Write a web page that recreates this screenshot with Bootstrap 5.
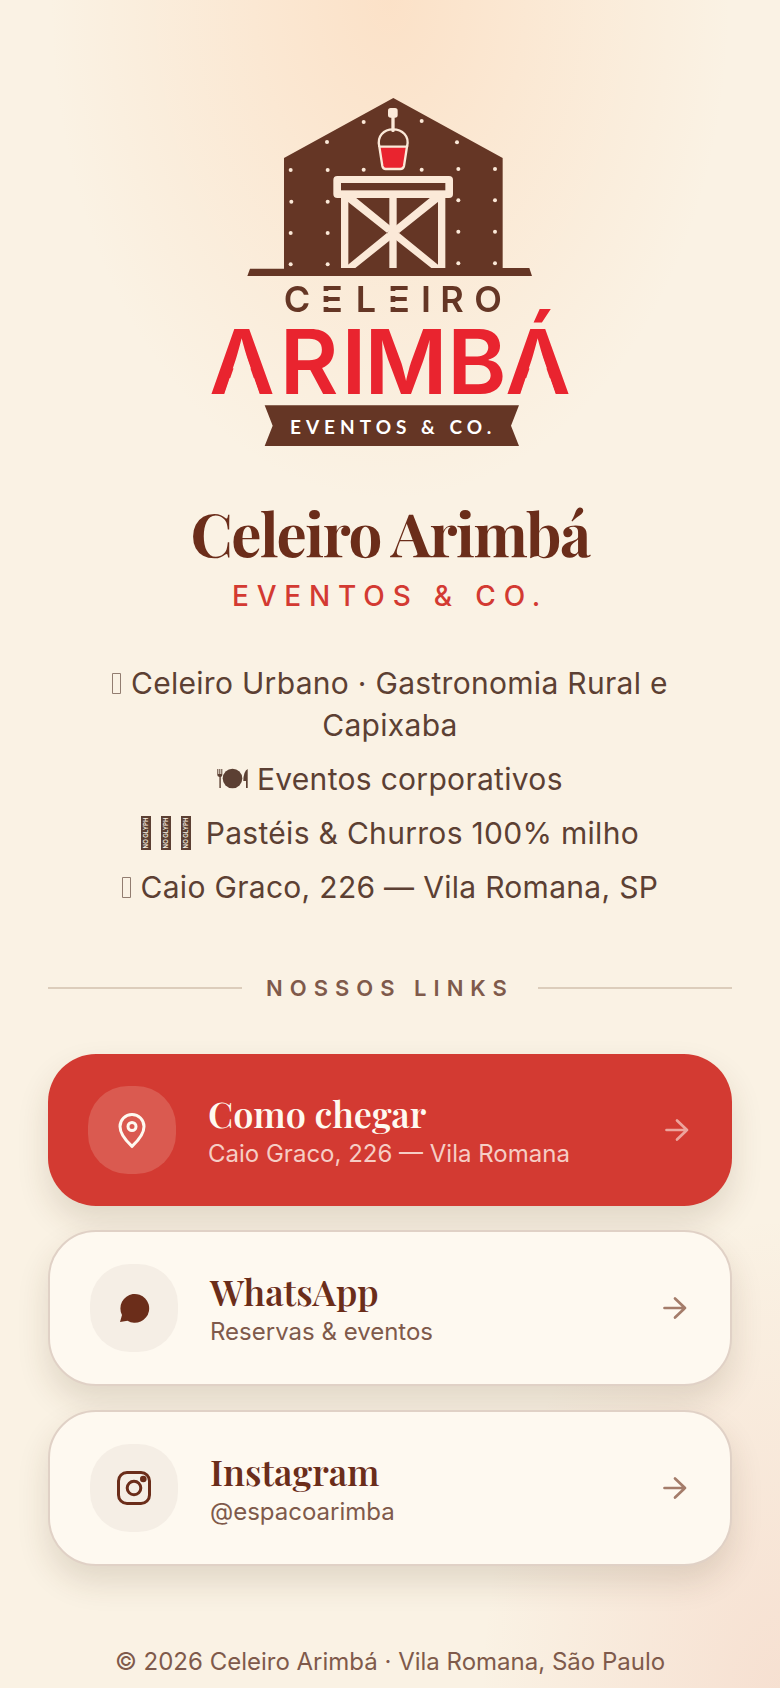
<!DOCTYPE html>
<html lang="pt-BR">
<head>
<meta charset="utf-8">
<meta name="viewport" content="width=device-width, initial-scale=1">
<title>Celeiro Arimbá — Eventos &amp; Co.</title>
<link href="https://cdn.jsdelivr.net/npm/bootstrap@5.3.0/dist/css/bootstrap.min.css" rel="stylesheet">
<style>
  :root { --cocoa: #6b2d1a; --brick: #d33a32; --soft: #7f5a4b; --paper: #fef9f0; }
  body {
    font-family: Inter, "Liberation Sans", sans-serif;
    color: #5c4033;
    background:
      radial-gradient(ellipse 340px 500px at 50% 0, rgba(255, 190, 140, .32), rgba(255, 190, 140, 0)) no-repeat,
      radial-gradient(ellipse 300px 480px at 100% 100%, rgba(225, 120, 100, .15), rgba(225, 120, 100, 0)) no-repeat,
      #faf2e4;
  }
  .page { max-width: 860px; padding: 96px 48px 16px; }
  .logo { width: 360px; max-width: 100%; overflow: visible; }
  .display-serif { font-family: "Playfair Display", "Liberation Serif", serif; color: var(--cocoa); }
  .brand-name { font-size: 60px; line-height: 72px; font-weight: 700; letter-spacing: -0.025em; margin-top: 48px; }
  .brand-tag { font-size: 28px; line-height: 40px; font-weight: 500; letter-spacing: 0.28em; color: var(--brick); margin-top: 8px; }
  .facts { font-size: 30px; line-height: 42px; letter-spacing: 0.01em; gap: 12px; margin: 46px 48px 0; }
  .facts svg { vertical-align: baseline; }
  .facts .glyph-low { vertical-align: -6px; margin-right: 6px; }
  .divider { gap: 24px; margin-top: 64px; color: var(--soft); }
  .divider::before, .divider::after { content: ""; flex: 1; height: 2px; background: #dccdbb; }
  .divider h2 { font-size: 22px; line-height: 32px; font-weight: 600; letter-spacing: 7px; }
  .links { gap: 24px; margin-top: 50px; }
  .link-card {
    gap: 32px; padding: 32px 40px; border-radius: 48px;
    background: var(--paper); border: 2px solid #e0d1c6; color: var(--soft);
    box-shadow: 0 16px 32px rgba(74, 50, 24, .14);
  }
  .link-card.primary { background: var(--brick); border: 0; color: #f6cdc5; }
  .link-icon { width: 88px; height: 88px; border-radius: 40px; background: #f5eee5; color: var(--cocoa); }
  .primary .link-icon { background: #da5a50; color: var(--paper); }
  .link-name { font-size: 36px; line-height: 48px; font-weight: 600; }
  .primary .link-name { color: var(--paper); }
  .link-note { font-size: 24px; line-height: 34px; }
  .arrow { color: #a47c6a; }
  .primary .arrow { color: #eda49d; }
  footer { font-size: 24px; line-height: 36px; color: var(--soft); margin-top: 78px; }
</style>
</head>
<body>
<div class="page container-fluid d-flex flex-column">
  <header class="text-center">
    <svg class="logo" viewBox="0 0 360 352" role="img" aria-label="Celeiro Arimbá Eventos &amp; Co.">
      <defs>
        <!-- stencil cuts of the lettering: bars of the E, open legs of the A -->
        <mask id="cut-small" maskUnits="userSpaceOnUse" x="0" y="170" width="360" height="60">
          <path fill="#fff" d="M0 170H360V230H0Z"/>
          <path fill="#000" d="M110 195h26v5h-26zM110 206h26v5h-26zM177 195h26v5h-26zM177 206h26v5h-26z"/>
        </mask>
        <mask id="cut-large" maskUnits="userSpaceOnUse" x="-10" y="190" width="380" height="130">
          <path fill="#fff" d="M-10 190H370V320H-10Z"/>
          <path fill="#000" d="M32 248L50 300H14ZM328 248L346 300H310Z"/>
        </mask>
      </defs>
      <g transform="scale(.333333) translate(-30 -48)">
        <path fill="#653625" d="M580 54L908 234V564H988L996 588H142L150 566H252V234Z"/>
        <g fill="#fbe9d8">
          <circle cx="491" cy="126" r="6"/><circle cx="665" cy="123" r="6"/><circle cx="381" cy="186" r="6"/><circle cx="771" cy="187" r="6"/>
          <circle cx="272" cy="270" r="6"/><circle cx="383" cy="270" r="6"/><circle cx="491" cy="269" r="6"/><circle cx="665" cy="269" r="6"/><circle cx="775" cy="267" r="6"/><circle cx="885" cy="267" r="6"/>
          <circle cx="274" cy="365" r="6"/><circle cx="383" cy="365" r="6"/><circle cx="775" cy="361" r="6"/><circle cx="885" cy="361" r="6"/>
          <circle cx="272" cy="459" r="6"/><circle cx="383" cy="459" r="6"/><circle cx="775" cy="455" r="6"/><circle cx="885" cy="455" r="6"/>
          <circle cx="272" cy="553" r="6"/><circle cx="383" cy="553" r="6"/><circle cx="775" cy="550" r="6"/><circle cx="885" cy="550" r="6"/>
          <rect x="400" y="288" width="359" height="66" rx="12"/>
          <path d="M423 350h22v214h-22zM714 350h22v214h-22zM568 350h22v214h-22z"/>
          <path d="M432 350H464L726 564H694L432 356zM726 350H694L432 564H466L726 356z"/>
          <path d="M562 460l18-30 18 30-18 28z"/>
          <rect x="564" y="84" width="29" height="29" rx="8"/><rect x="574" y="106" width="10" height="50" rx="4"/>
        </g>
        <rect x="423" y="309" width="313" height="22" fill="#653625"/>
        <path d="M538 200L547 258Q549 267 557 267H601Q610 267 612 258L621 200Z" fill="#e9242f" stroke="#fbe9d8" stroke-width="7"/>
        <path d="M538 200C530 168 552 148 579 148S630 168 621 200" fill="none" stroke="#fbe9d8" stroke-width="7"/>
        <path fill="#653625" d="M194 976H957L933 1037 957 1098H194L218 1037Z"/>
      </g>
      <text mask="url(#cut-small)" text-anchor="middle" x="87 122 156 189 216 242 278" y="216" font-family="Inter, sans-serif" font-weight="600" font-size="36" fill="#653625">CELEIRO</text>
      <text mask="url(#cut-large)" text-anchor="middle" x="32 99 144 196 267 328" y="298" font-family="Inter, sans-serif" font-weight="600" font-size="90" fill="#e9242f">ARIMBÁ</text>
      <text x="80" y="338" font-family="Lato, Inter, sans-serif" font-weight="700" font-size="19" letter-spacing="5" fill="#fff">EVENTOS &amp; CO.</text>
    </svg>
    <h1 class="brand-name display-serif mb-0">Celeiro Arimbá</h1>
    <p class="brand-tag mb-0">EVENTOS &amp; CO.</p>
    <ul class="facts list-unstyled d-flex flex-column mb-0">
      <li><svg width="10" height="21" viewBox="0 0 10 21" fill="none" stroke="#927d70" aria-hidden="true"><path d="M.5 .5h8v20h-8z"/></svg> Celeiro Urbano · Gastronomia Rural e Capixaba</li>
      <li><svg width="31" height="22" viewBox="0 0 31 22" fill="currentColor" aria-hidden="true"><circle cx="15.500" cy="10.500" r="9.800"/><path d="M.3 1h1v5h1V1h1v5h1V1h1v6q0 1.500-1.500 2V20h-1.400V9Q.3 8.500.3 7zM30.700 1V20h-1.700v-7h-2.700Q26.500 3 30.700 1z"/></svg> Eventos corporativos</li>
      <li><svg class="glyph-low" width="50" height="34" viewBox="0 0 50 34" aria-hidden="true">
        <path fill="currentColor" d="M0 0h10v34H0zM20 0h10v34H20zM40 0h10v34H40z"/>
        <g font-family="Inter, sans-serif" font-weight="600" font-size="6" fill="#faf2e4" text-anchor="middle" letter-spacing="0">
          <text transform="translate(7 17) rotate(-90)">NO GLYPH</text><text transform="translate(27 17) rotate(-90)">NO GLYPH</text><text transform="translate(47 17) rotate(-90)">NO GLYPH</text>
        </g></svg> Pastéis &amp; Churros 100% milho</li>
      <li><svg width="10" height="21" viewBox="0 0 10 21" fill="none" stroke="#927d70" aria-hidden="true"><path d="M.5 .5h8v20h-8z"/></svg> Caio Graco, 226 — Vila Romana, SP</li>
    </ul>
  </header>

  <main>
    <div class="divider d-flex align-items-center"><h2 class="mb-0">NOSSOS LINKS</h2></div>
    <nav class="links d-flex flex-column" aria-label="Nossos links">
      <a href="#como-chegar" class="link-card primary d-flex align-items-center text-decoration-none">
        <span class="link-icon d-flex align-items-center justify-content-center flex-shrink-0">
          <svg width="40" height="40" viewBox="0 0 40 40" fill="none" stroke="currentColor" stroke-width="3" aria-hidden="true"><path d="M20 36.300C16 32.500 8 25.500 8 16.500a12 12 0 0 1 24 0C32 25.500 24 32.500 20 36.300Z"/><circle cx="20" cy="16.500" r="4"/></svg>
        </span>
        <span class="flex-grow-1">
          <span class="link-name display-serif d-block">Como chegar</span>
          <span class="link-note d-block">Caio Graco, 226 — Vila Romana</span>
        </span>
        <svg class="arrow flex-shrink-0" width="32" height="32" viewBox="0 0 32 32" fill="none" stroke="currentColor" stroke-width="2.700" stroke-linecap="round" stroke-linejoin="round" aria-hidden="true"><path d="M6.500 16H27M17 6.500L27 16 17 25.500"/></svg>
      </a>
      <a href="#whatsapp" class="link-card d-flex align-items-center text-decoration-none">
        <span class="link-icon d-flex align-items-center justify-content-center flex-shrink-0">
          <svg width="40" height="40" viewBox="0 0 40 40" fill="currentColor" aria-hidden="true"><path d="M6 34L8 27A14.400 14.400 0 1 1 13.500 32.800Z"/></svg>
        </span>
        <span class="flex-grow-1">
          <span class="link-name display-serif d-block">WhatsApp</span>
          <span class="link-note d-block">Reservas &amp; eventos</span>
        </span>
        <svg class="arrow flex-shrink-0" width="32" height="32" viewBox="0 0 32 32" fill="none" stroke="currentColor" stroke-width="2.700" stroke-linecap="round" stroke-linejoin="round" aria-hidden="true"><path d="M6.500 16H27M17 6.500L27 16 17 25.500"/></svg>
      </a>
      <a href="#instagram" class="link-card d-flex align-items-center text-decoration-none">
        <span class="link-icon d-flex align-items-center justify-content-center flex-shrink-0">
          <svg width="40" height="40" viewBox="0 0 40 40" fill="none" stroke="currentColor" stroke-width="3" aria-hidden="true"><rect x="4.500" y="4.500" width="31" height="31" rx="8.500"/><circle cx="20" cy="20" r="6.800"/><circle cx="29.300" cy="11" r="3.300" fill="currentColor" stroke="none"/></svg>
        </span>
        <span class="flex-grow-1">
          <span class="link-name display-serif d-block">Instagram</span>
          <span class="link-note d-block">@espacoarimba</span>
        </span>
        <svg class="arrow flex-shrink-0" width="32" height="32" viewBox="0 0 32 32" fill="none" stroke="currentColor" stroke-width="2.700" stroke-linecap="round" stroke-linejoin="round" aria-hidden="true"><path d="M6.500 16H27M17 6.500L27 16 17 25.500"/></svg>
      </a>
    </nav>
  </main>

  <footer class="text-center">© 2026 Celeiro Arimbá · Vila Romana, São Paulo</footer>
</div>
<script src="https://cdn.jsdelivr.net/npm/bootstrap@5.3.0/dist/js/bootstrap.bundle.min.js"></script>
</body>
</html>
